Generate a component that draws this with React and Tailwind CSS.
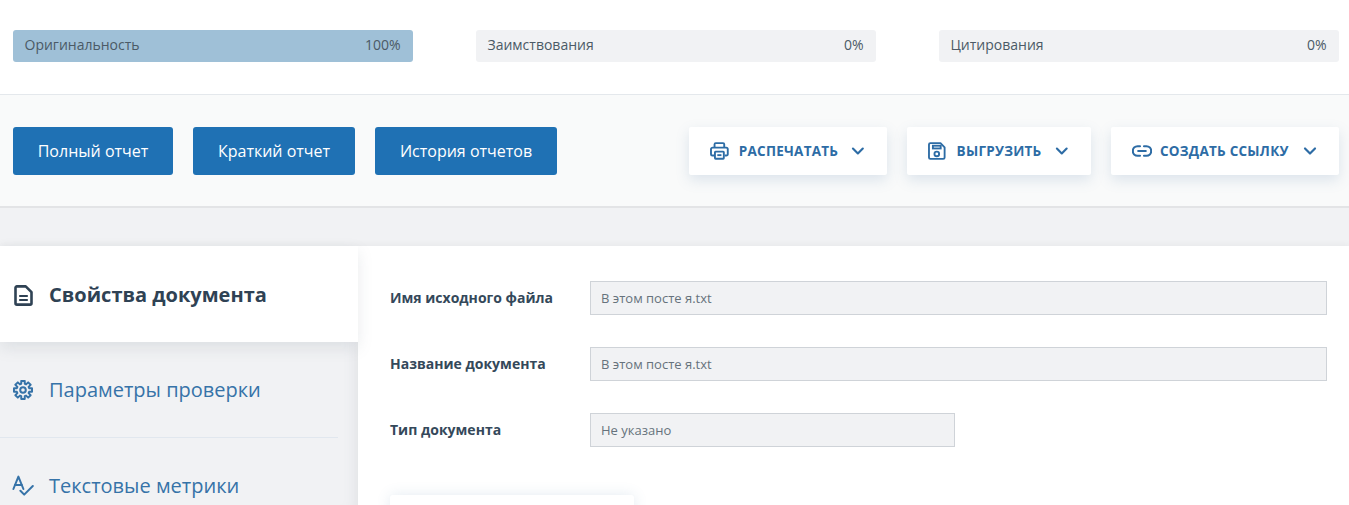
import React from "react";
import { ChevronDown } from "lucide-react";

const font = "font-['Open_Sans','Noto_Sans',sans-serif]";

function Stat({ label, value, active }) {
  return (
    <div className={`flex h-8 w-[400px] items-center justify-between rounded-[3px] pb-[3px] pl-[11.5px] pr-[12.5px] text-[14px] text-[#4b5a66] ${active ? "bg-[#9fc0d7]" : "bg-[#f1f2f4]"}`}>
      <span>{label}</span>
      <span>{value}</span>
    </div>
  );
}

function Primary({ children, w }) {
  return (
    <button className={`flex h-12 items-center justify-center rounded-[3px] bg-[#1f71b4] text-[16px] text-white ${w}`}>
      {children}
    </button>
  );
}

function Action({ icon, label, w, gap }) {
  return (
    <button className={`flex h-12 items-center rounded-[2px] bg-white pl-[21px] pr-[19px] text-[13.5px] font-bold tracking-[0.25px] text-[#2d6ca5] shadow-[0_5px_14px_rgba(90,130,170,0.18)] ${w} ${gap}`}>
      {icon}
      <span>{label}</span>
      <ChevronDown size={20} strokeWidth={2.6} className="ml-auto" />
    </button>
  );
}

function PrinterIcon() {
  return (
    <svg width="19" height="18" viewBox="0 0 19 18" fill="none" stroke="currentColor" strokeWidth="1.9" strokeLinejoin="round">
      <path d="M4.6 5.6V2.2a1.2 1.2 0 0 1 1.2-1.2h7.4a1.2 1.2 0 0 1 1.2 1.2v3.4" />
      <path d="M4.2 13.6H2.4A1.4 1.4 0 0 1 1 12.2V7.2a1.6 1.6 0 0 1 1.6-1.6h13.8A1.6 1.6 0 0 1 18 7.2v5a1.4 1.4 0 0 1-1.4 1.4h-1.8" />
      <rect x="5" y="9.6" width="9" height="7.2" rx="0.6" />
      <path d="M7.4 13.2h4.2" />
    </svg>
  );
}

function Floppy() {
  return (
    <svg width="18" height="18" viewBox="0 0 18 18" fill="none" stroke="currentColor" strokeWidth="1.9">
      <path d="M1 2.4A1.4 1.4 0 0 1 2.4 1h10.4L17 5.2v10.4a1.4 1.4 0 0 1-1.4 1.4H2.4A1.4 1.4 0 0 1 1 15.6z" strokeLinejoin="round" />
      <rect x="5" y="3.6" width="8" height="2.8" />
      <circle cx="9" cy="12" r="2.4" />
    </svg>
  );
}

function LinkIcon() {
  return (
    <svg width="20" height="12" viewBox="0 0 20 12" fill="none" stroke="currentColor" strokeWidth="2.1" strokeLinecap="round">
      <path d="M8 1.2H5.6a4.8 4.8 0 0 0 0 9.6H8" />
      <path d="M12 1.2h2.4a4.8 4.8 0 0 1 0 9.6H12" />
      <path d="M6.2 6h7.6" />
    </svg>
  );
}

function DocIcon() {
  return (
    <svg width="19" height="21" viewBox="0 0 19 21" fill="none" stroke="currentColor" strokeWidth="2.6" strokeLinejoin="round">
      <path d="M1.5 2.8A1.4 1.4 0 0 1 2.9 1.4h8.8l5.8 5.8V18.2a1.4 1.4 0 0 1-1.4 1.4H2.9a1.4 1.4 0 0 1-1.4-1.4z" />
      <path d="M5.2 11h8.6M5.2 15h8.6" strokeWidth="2" />
    </svg>
  );
}

function gearPath() {
  const pts = [];
  const teeth = 8;
  for (let i = 0; i < teeth; i++) {
    const a = (i * 2 * Math.PI) / teeth - Math.PI / 2;
    const step = (2 * Math.PI) / teeth;
    [[-0.36, 6.4], [-0.24, 9.2], [0.24, 9.2], [0.36, 6.4]].forEach(([k, r]) => {
      const t = a + k * step;
      pts.push(`${(10 + r * Math.cos(t)).toFixed(2)} ${(10 + r * Math.sin(t)).toFixed(2)}`);
    });
  }
  return `M${pts.join("L")}Z`;
}

function GearIcon() {
  return (
    <svg width="20" height="20" viewBox="0 0 20 20" fill="none" stroke="currentColor" strokeWidth="2" strokeLinejoin="round">
      <path d={gearPath()} />
      <circle cx="10" cy="10" r="2.8" />
    </svg>
  );
}

function Metrics() {
  return (
    <svg width="22" height="22" viewBox="0 0 22 22" fill="none" stroke="currentColor" strokeWidth="2" strokeLinecap="round" strokeLinejoin="round">
      <path d="M1.4 14 6.4 1.6 11.4 14" />
      <path d="M3 10h6.8" />
      <path d="m8.4 15.8 3.8 3.8 8.6-8.6" />
    </svg>
  );
}

function Field({ label, value, w }) {
  return (
    <div className="flex items-center">
      <div className="w-[200px] pb-[2px] text-[14px] font-bold text-[#34485a]">{label}</div>
      <div className={`flex h-[34px] items-center border border-[#cfd3d8] bg-[#f1f2f4] px-[10px] pt-[2px] text-[13px] text-[#66727c] ${w}`}>{value}</div>
    </div>
  );
}

export default function App() {
  return (
    <div className={`h-[505px] w-[1349px] overflow-hidden bg-white ${font}`}>
      <div className="flex h-[95px] items-start justify-between border-b border-[#e4e8ec] pl-[13px] pr-[10px] pt-[30px]">
        <Stat label="Оригинальность" value="100%" active />
        <Stat label="Заимствования" value="0%" />
        <Stat label="Цитирования" value="0%" />
      </div>

      <div className="flex h-[113px] items-start justify-between border-b-2 border-[#e3e4e6] bg-[#f9fafa] pl-[13px] pr-[10px] pt-8">
        <div className="flex gap-5">
          <Primary w="w-[160px]">Полный отчет</Primary>
          <Primary w="w-[162px]">Краткий отчет</Primary>
          <Primary w="w-[182px]">История отчетов</Primary>
        </div>
        <div className="flex gap-5">
          <Action icon={<PrinterIcon />} label="РАСПЕЧАТАТЬ" w="w-[198px]" gap="gap-[10px]" />
          <Action icon={<Floppy />} label="ВЫГРУЗИТЬ" w="w-[184px]" gap="gap-[11px]" />
          <Action icon={<LinkIcon />} label="СОЗДАТЬ ССЫЛКУ" w="w-[228px]" gap="gap-2" />
        </div>
      </div>

      <div className="h-[38px] bg-[#f1f2f4]" />

      <div className="flex shadow-[0_-2px_6px_rgba(0,0,0,0.04)]">
        <aside className="h-[259px] w-[358px] shrink-0 bg-[#f1f2f4] shadow-[inset_-14px_0_14px_-12px_rgba(120,130,140,0.14)]">
          <div className="flex h-24 items-center gap-[16px] bg-white pl-[14px] pt-[2px] text-[20px] font-bold text-[#2f4254] shadow-[0_6px_14px_rgba(120,130,140,0.16)]">
            <DocIcon />
            <span>Свойства документа</span>
          </div>
          <div className="mr-5 flex h-24 items-center gap-[16px] border-b border-[#e1e7ee] pl-[13px] pt-[1px] text-[20px] text-[#3673a8]">
            <GearIcon />
            <span>Параметры проверки</span>
          </div>
          <div className="flex h-24 items-center gap-[15px] pl-[12px] text-[20px] text-[#3673a8]">
            <Metrics />
            <span>Текстовые метрики</span>
          </div>
        </aside>

        <main className="min-w-0 flex-1 pl-8 pr-[22px] pt-[35px]">
          <div className="flex flex-col gap-8">
            <Field label="Имя исходного файла" value="В этом посте я.txt" w="w-[737px]" />
            <Field label="Название документа" value="В этом посте я.txt" w="w-[737px]" />
            <Field label="Тип документа" value="Не указано" w="w-[365px]" />
          </div>
          <div className="mt-12 h-12 w-[244px] rounded-[3px] bg-white shadow-[0_0_14px_rgba(90,130,170,0.16)]" />
        </main>
      </div>
    </div>
  );
}
